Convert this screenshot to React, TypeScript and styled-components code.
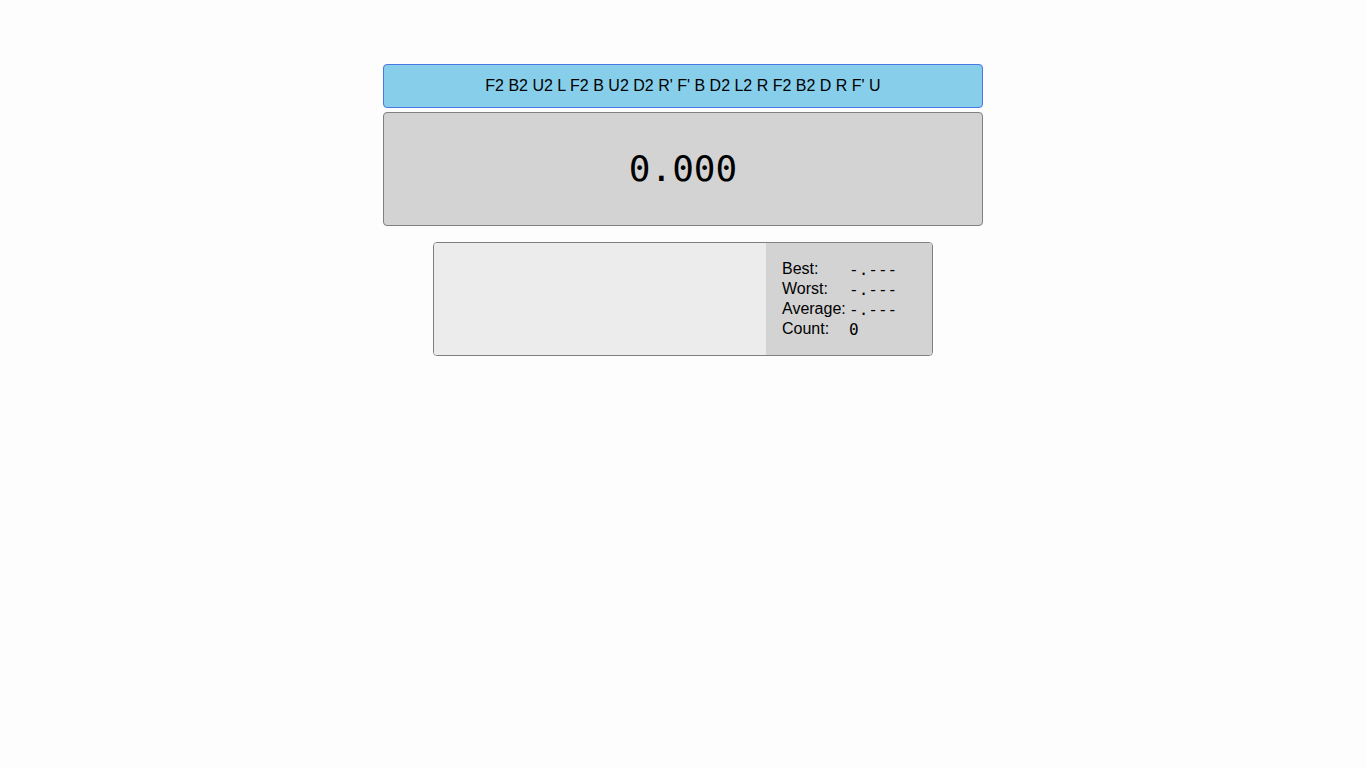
import React from 'react'
import styled, { createGlobalStyle } from 'styled-components'

const GlobalStyle = createGlobalStyle`
  body {
    margin: 0;
    background: #fdfdfd;
    font-family: "Liberation Sans", Arial, sans-serif;
    color: #000;
  }
`

const Page = styled.main`
  display: flex;
  flex-direction: column;
  align-items: center;
  padding-top: 64px;
`
const Scramble = styled.div`
  width: 600px;
  height: 44px;
  box-sizing: border-box;
  display: flex;
  align-items: center;
  justify-content: center;
  background: #87ceeb;
  border: 1px solid #4a76e6;
  border-radius: 4px;
  font-size: 16px;
`
const Timer = styled.div`
  width: 600px;
  height: 114px;
  box-sizing: border-box;
  margin-top: 4px;
  display: flex;
  align-items: center;
  justify-content: center;
  background: #d3d3d3;
  border: 1px solid #808080;
  border-radius: 4px;
  font-family: "DejaVu Sans Mono", monospace;
  font-size: 36px;
  padding-bottom: 2px;
`
const Stats = styled.section`
  width: 500px;
  height: 114px;
  box-sizing: border-box;
  margin-top: 16px;
  display: flex;
  border: 1px solid #808080;
  border-radius: 4px;
  overflow: hidden;
`
const History = styled.div`
  flex: 1;
  background: #ececec;
`
const Summary = styled.div`
  width: 166px;
  box-sizing: border-box;
  padding: 16px;
  background: #d3d3d3;
`
const Row = styled.div`
  display: flex;
  height: 20px;
  align-items: center;
  font-size: 16px;
`
const Label = styled.span`
  width: 67px;
`
const Value = styled.span`
  font-family: "DejaVu Sans Mono", monospace;
  font-size: 16px;
`

const stats = [
  { label: 'Best:', value: '-.---' },
  { label: 'Worst:', value: '-.---' },
  { label: 'Average:', value: '-.---' },
  { label: 'Count:', value: '0' },
]

export default function App() {
  return (
    <>
      <GlobalStyle />
      <Page>
        <Scramble>F2 B2 U2 L F2 B U2 D2 R' F' B D2 L2 R F2 B2 D R F' U</Scramble>
        <Timer>0.000</Timer>
        <Stats>
          <History />
          <Summary>
            {stats.map((s) => (
              <Row key={s.label}>
                <Label>{s.label}</Label>
                <Value>{s.value}</Value>
              </Row>
            ))}
          </Summary>
        </Stats>
      </Page>
    </>
  )
}
